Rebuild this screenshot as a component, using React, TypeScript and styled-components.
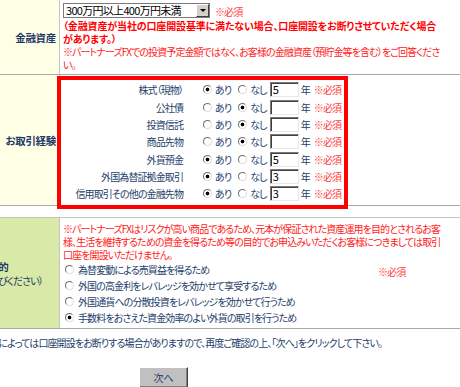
import { createGlobalStyle, styled } from 'styled-components';

const GlobalStyle = createGlobalStyle`
  html, body {
    margin: 0;
    padding: 0;
    background: #ffffff;
    overflow: hidden;
  }
  body {
    font-family: "Noto Sans CJK JP", "DejaVu Sans", sans-serif;
    font-size: 10px;
    line-height: 13px;
    letter-spacing: -0.9px;
    font-feature-settings: "palt";
    color: #23406b;
  }
`;

const Page = styled.div`
  margin-left: -83px;
  width: 760px;
`;

const FormTable = styled.div<{ $top?: boolean }>`
  display: flex;
  flex-direction: column;
  border-top: ${({ $top }) => ($top ? '1px solid #c4c4c4' : 'none')};
  margin-top: ${({ $top }) => ($top ? '11px' : '0')};
`;

const FormRow = styled.div`
  position: relative;
  display: grid;
  grid-template-columns: 143px 1fr;
  border-bottom: 1px solid #a8a8a8;
`;

const HeadCell = styled.div<{ $tone: 'yellow' | 'green'; $align?: 'right' | 'center' }>`
  display: flex;
  flex-direction: column;
  justify-content: center;
  align-items: ${({ $align }) => ($align === 'center' ? 'center' : 'flex-end')};
  text-align: ${({ $align }) => $align ?? 'right'};
  padding-right: ${({ $align }) => ($align === 'center' ? '0' : '3px')};
  background: ${({ $tone }) => ($tone === 'yellow' ? '#ffffe6' : '#d8e9a8')};
  border-right: 1px solid #c4c4c4;
  color: #1d3a66;
  white-space: nowrap;
`;

const HeadTitle = styled.span`
  font-weight: bold;
  font-size: 10.5px;
  letter-spacing: -0.3px;
`;

const HeadHint = styled.span`
  margin-top: 1px;
`;

const DataCell = styled.div<{ $pad: string }>`
  padding: ${({ $pad }) => $pad};
  display: flex;
  flex-direction: column;
  min-width: 0;
`;

const Line = styled.div`
  display: flex;
  align-items: center;
  gap: 5px;
`;

const FakeSelect = styled.div`
  box-sizing: border-box;
  width: 147px;
  height: 15px;
  margin-bottom: 1px;
  display: flex;
  align-items: center;
  justify-content: space-between;
  border: 1px solid #7a7a7a;
  background: #fff;
  color: #000;
  font-size: 11px;
  letter-spacing: -0.7px;
  white-space: nowrap;
  padding-left: 2px;
`;

const SelectArrow = styled.span`
  box-sizing: border-box;
  width: 13px;
  height: 13px;
  background: #d4d0c8;
  border: 1px solid;
  border-color: #fff #404040 #404040 #fff;
  display: flex;
  align-items: center;
  justify-content: center;

  &::after {
    content: '';
    border-left: 3px solid transparent;
    border-right: 3px solid transparent;
    border-top: 3px solid #000;
  }
`;

const Required = styled.span`
  color: #ff3b3b;
  white-space: nowrap;
`;

const Warning = styled.div<{ $bold?: boolean }>`
  color: ${({ $bold }) => ($bold ? '#ff0000' : '#ff1a1a')};
  font-weight: ${({ $bold }) => ($bold ? 'bold' : 'normal')};
  letter-spacing: ${({ $bold }) => ($bold ? '-0.15px' : '-0.9px')};
  white-space: nowrap;
`;

const Experience = styled.div`
  display: grid;
  grid-auto-rows: 17.35px;
`;

const ExpRow = styled.div`
  display: flex;
  align-items: center;
`;

const ExpLabel = styled.span`
  width: 123px;
  text-align: right;
  white-space: nowrap;
  margin-right: 20px;
`;

const Choice = styled.label<{ $gap?: number }>`
  display: inline-flex;
  align-items: center;
  gap: 3px;
  margin-right: ${({ $gap }) => $gap ?? 0}px;
  white-space: nowrap;
`;

const Radio = styled.span<{ $checked: boolean }>`
  box-sizing: border-box;
  display: inline-block;
  width: 9px;
  height: 9px;
  border-radius: 50%;
  border: 1px solid;
  border-color: #707070 #dcdcdc #dcdcdc #707070;
  background: ${({ $checked }) =>
    $checked ? 'radial-gradient(circle, #000 0 1.6px, #fff 2.2px)' : '#fff'};
  flex: none;
`;

const YearBox = styled.span`
  box-sizing: border-box;
  display: inline-flex;
  align-items: center;
  width: 29px;
  height: 15px;
  padding-left: 2px;
  border: 1px solid;
  border-color: #7a7a7a #e8e8e8 #e8e8e8 #7a7a7a;
  box-shadow: inset 1px 1px 0 #404040;
  color: #000;
  font-size: 11px;
  margin-right: 2px;
`;

const Unit = styled.span`
  margin-right: 4px;
`;

const Highlight = styled.div`
  position: absolute;
  left: 140px;
  top: 1px;
  width: 291px;
  height: 133px;
  box-sizing: border-box;
  border: 4px solid #ff0000;
  pointer-events: none;
`;

const PurposeBody = styled.div`
  display: flex;
  align-items: flex-start;
`;

const PurposeList = styled.div`
  width: 315px;
  display: grid;
  grid-auto-rows: 16px;
`;

const PurposeItem = styled.label`
  display: flex;
  align-items: center;
  gap: 4px;
  white-space: nowrap;
  padding-left: 2px;
`;

const PurposeNote = styled(Required)`
  margin-top: 4px;
`;

const Footer = styled.div`
  width: 493px;
  display: flex;
  flex-direction: column;
  align-items: center;
  padding-top: 7px;
  gap: 18px;
`;

const Notice = styled.p`
  margin: 0;
  white-space: nowrap;
`;

const NextButton = styled.button`
  box-sizing: border-box;
  width: 49px;
  height: 21px;
  background: #c0c0c0;
  border: 1px solid;
  border-color: #ffffff #404040 #404040 #ffffff;
  box-shadow: inset -1px -1px 0 #808080;
  font: inherit;
  letter-spacing: 0;
  color: #1d3a66;
  padding: 0;
`;

type Exp = { label: string; has: boolean; years: string };

const experiences: Exp[] = [
  { label: '株式（現物）', has: true, years: '5' },
  { label: '公社債', has: false, years: '' },
  { label: '投資信託', has: false, years: '' },
  { label: '商品先物', has: false, years: '' },
  { label: '外貨預金', has: true, years: '5' },
  { label: '外国為替証拠金取引', has: true, years: '3' },
  { label: '信用取引その他の金融先物', has: true, years: '3' },
];

const purposes = [
  { text: '為替変動による売買益を得るため', checked: false },
  { text: '外国の高金利をレバレッジを効かせて享受するため', checked: false },
  { text: '外国通貨への分散投資をレバレッジを効かせて行うため', checked: false },
  { text: '手数料をおさえた資金効率のよい外貨の取引を行うため', checked: true },
];

export default function App() {
  return (
    <>
      <GlobalStyle />
      <Page>
        <FormTable>
          <FormRow>
            <HeadCell $tone='yellow'>
              <HeadTitle>金融資産</HeadTitle>
            </HeadCell>
            <DataCell $pad='3px 0 3px 3px'>
              <Line>
                <FakeSelect>
                  300万円以上400万円未満
                  <SelectArrow />
                </FakeSelect>
                <Required>※必須</Required>
              </Line>
              <Warning $bold>
                （金融資産が当社の口座開設基準に満たない場合、口座開設をお断りさせていただく場合
              </Warning>
              <Warning $bold>があります。）</Warning>
              <Warning>
                ※パートナーズFXでの投資予定金額ではなく、お客様の金融資産（預貯金等を含む）をご回答くださ
              </Warning>
              <Warning>い。</Warning>
            </DataCell>
          </FormRow>

          <FormRow>
            <HeadCell $tone='yellow'>
              <HeadTitle>お取引経験</HeadTitle>
            </HeadCell>
            <DataCell $pad='6px 0 3px 0'>
              <Experience>
                {experiences.map((e) => (
                  <ExpRow key={e.label}>
                    <ExpLabel>{e.label}</ExpLabel>
                    <Choice $gap={7}>
                      <Radio $checked={e.has} />
                      あり
                    </Choice>
                    <Choice $gap={3}>
                      <Radio $checked={!e.has} />
                      なし
                    </Choice>
                    <YearBox>{e.years}</YearBox>
                    <Unit>年</Unit>
                    <Required>※必須</Required>
                  </ExpRow>
                ))}
              </Experience>
            </DataCell>
            <Highlight />
          </FormRow>
        </FormTable>

        <FormTable $top>
          <FormRow>
            <HeadCell $tone='green' $align='center'>
              <HeadTitle>投資目的</HeadTitle>
              <HeadHint>（いずれかをお選びください）</HeadHint>
            </HeadCell>
            <DataCell $pad='4px 0 3px 3px'>
              <Warning>
                ※パートナーズFXはリスクが高い商品であるため、元本が保証された資産運用を目的とされるお客
              </Warning>
              <Warning>
                様、生活を維持するための資金を得るため等の目的でお申込みいただくお客様につきましては取引
              </Warning>
              <Warning>口座を開設いただけません。</Warning>
              <PurposeBody>
                <PurposeList>
                  {purposes.map((p) => (
                    <PurposeItem key={p.text}>
                      <Radio $checked={p.checked} />
                      {p.text}
                    </PurposeItem>
                  ))}
                </PurposeList>
                <PurposeNote>※必須</PurposeNote>
              </PurposeBody>
            </DataCell>
          </FormRow>
        </FormTable>

        <Footer>
          <Notice>
            ※ご回答内容によっては口座開設をお断りする場合がありますので、再度ご確認の上、「次へ」をクリックして下さい。
          </Notice>
          <NextButton type='button'>次へ</NextButton>
        </Footer>
      </Page>
    </>
  );
}
